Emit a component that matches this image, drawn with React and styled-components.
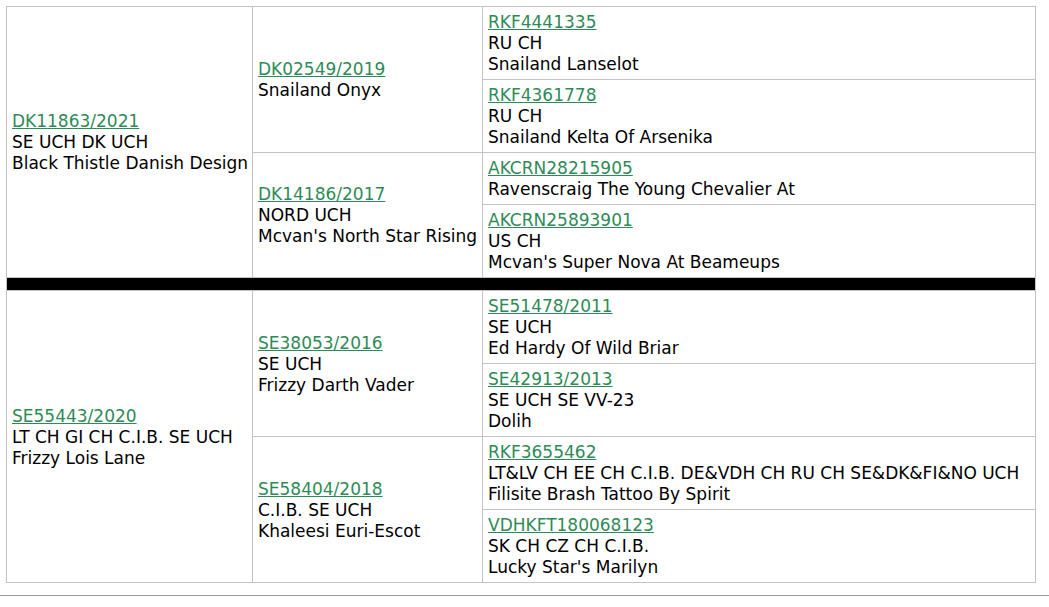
import React from 'react';
import styled, { createGlobalStyle } from 'styled-components';

const GlobalStyle = createGlobalStyle`
  html, body {
    margin: 0;
    padding: 0;
    background: #fff;
  }
`;

const Page = styled.div`
  font-family: "DejaVu Sans", Verdana, sans-serif;
  font-size: 17px;
  line-height: 21px;
  color: #000;
`;

const Wrap = styled.div`
  padding: 6px 0 0 6px;
`;

const Pedigree = styled.table`
  width: 1030px;
  table-layout: fixed;
  border-collapse: collapse;
  border: 1px solid #c3c3c3;
`;

const Cell = styled.td`
  border: 1px solid #c3c3c3;
  padding: 5px 5px 4px;
  vertical-align: ${(p) => (p.$top ? 'top' : 'middle')};
  white-space: nowrap;
  overflow: hidden;
`;

const Divider = styled.td`
  height: 12px;
  padding: 0;
  background: #000;
  border: 1px solid #c3c3c3;
`;

const RegLink = styled.a`
  display: block;
  color: #2e8b57;
  text-decoration: underline;
  text-decoration-color: #2e8b57;
`;

const Line = styled.div``;

const Rule = styled.hr`
  margin: 12px 0 0;
  border: 0;
  border-top: 1px solid #9d9d9d;
  height: 0;
`;

const pedigree = [
  {
    reg: 'DK11863/2021',
    titles: 'SE UCH DK UCH',
    name: 'Black Thistle Danish Design',
    parents: [
      {
        reg: 'DK02549/2019',
        name: 'Snailand Onyx',
        parents: [
          { reg: 'RKF4441335', titles: 'RU CH', name: 'Snailand Lanselot' },
          { reg: 'RKF4361778', titles: 'RU CH', name: 'Snailand Kelta Of Arsenika' },
        ],
      },
      {
        reg: 'DK14186/2017',
        titles: 'NORD UCH',
        name: "Mcvan's North Star Rising",
        parents: [
          { reg: 'AKCRN28215905', name: 'Ravenscraig The Young Chevalier At' },
          { reg: 'AKCRN25893901', titles: 'US CH', name: "Mcvan's Super Nova At Beameups" },
        ],
      },
    ],
  },
  {
    reg: 'SE55443/2020',
    titles: 'LT CH GI CH C.I.B. SE UCH',
    name: 'Frizzy Lois Lane',
    parents: [
      {
        reg: 'SE38053/2016',
        titles: 'SE UCH',
        name: 'Frizzy Darth Vader',
        parents: [
          { reg: 'SE51478/2011', titles: 'SE UCH', name: 'Ed Hardy Of Wild Briar' },
          { reg: 'SE42913/2013', titles: 'SE UCH SE VV-23', name: 'Dolih' },
        ],
      },
      {
        reg: 'SE58404/2018',
        titles: 'C.I.B. SE UCH',
        name: 'Khaleesi Euri-Escot',
        parents: [
          {
            reg: 'RKF3655462',
            titles: 'LT&LV CH EE CH C.I.B. DE&VDH CH RU CH SE&DK&FI&NO UCH',
            name: 'Filisite Brash Tattoo By Spirit',
          },
          { reg: 'VDHKFT180068123', titles: 'SK CH CZ CH C.I.B.', name: "Lucky Star's Marilyn" },
        ],
      },
    ],
  },
];

const Dog = ({ dog }) => (
  <>
    <RegLink href="#">{dog.reg}</RegLink>
    {dog.titles && <Line>{dog.titles}</Line>}
    <Line>{dog.name}</Line>
  </>
);

const Branch = ({ dog }) => {
  const rows = [];
  dog.parents.forEach((parent, i) => {
    parent.parents.forEach((gp, j) => {
      rows.push(
        <tr key={`${i}-${j}`}>
          {i === 0 && j === 0 && (
            <Cell rowSpan={4}>
              <Dog dog={dog} />
            </Cell>
          )}
          {j === 0 && (
            <Cell rowSpan={2}>
              <Dog dog={parent} />
            </Cell>
          )}
          <Cell $top>
            <Dog dog={gp} />
          </Cell>
        </tr>
      );
    });
  });
  return rows;
};

export default function App() {
  return (
    <Page>
      <GlobalStyle />
      <Wrap>
        <Pedigree>
          <colgroup>
            <col style={{ width: 246 }} />
            <col style={{ width: 230 }} />
            <col />
          </colgroup>
          <tbody>
            <Branch dog={pedigree[0]} />
            <tr>
              <Divider colSpan={3} />
            </tr>
            <Branch dog={pedigree[1]} />
          </tbody>
        </Pedigree>
      </Wrap>
      <Rule />
    </Page>
  );
}
